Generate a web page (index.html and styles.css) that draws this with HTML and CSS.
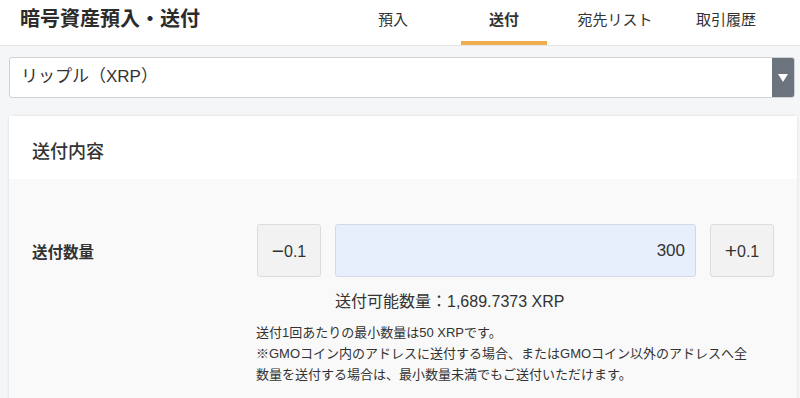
FILE: index.html
```html
<!DOCTYPE html>
<html lang="ja">
<head>
  <meta charset="UTF-8">
  <meta name="viewport" content="width=device-width, initial-scale=1.0">
  <title>暗号資産預入・送付</title>
  <link rel="stylesheet" href="styles.css">
</head>
<body>
  <header class="page-header">
    <h1 class="page-title">暗号資産預入・送付</h1>
    <nav class="tabs">
      <a href="#" class="tab">預入</a>
      <a href="#" class="tab active">送付</a>
      <a href="#" class="tab">宛先リスト</a>
      <a href="#" class="tab">取引履歴</a>
    </nav>
  </header>

  <main class="content">
    <div class="coin-select">
      <span class="coin-name">リップル（XRP）</span>
      <span class="select-arrow">
        <svg width="10" height="8" viewBox="0 0 10 8"><path d="M0 0h10L5 8z" fill="#fff"/></svg>
      </span>
    </div>

    <section class="card">
      <div class="card-header">送付内容</div>
      <div class="card-body">
        <div class="amount-row">
          <div class="amount-label">送付数量</div>
          <div class="amount-controls">
            <button class="step-btn"><span class="sign">−</span>0.1</button>
            <div class="amount-input">300</div>
            <button class="step-btn"><span class="sign">+</span>0.1</button>
          </div>
        </div>
        <p class="available">送付可能数量：1,689.7373 XRP</p>
        <div class="notes">
          <p>送付1回あたりの最小数量は50 XRPです。</p>
          <p>※GMOコイン内のアドレスに送付する場合、またはGMOコイン以外のアドレスへ全数量を送付する場合は、最小数量未満でもご送付いただけます。</p>
        </div>
      </div>
    </section>
  </main>
</body>
</html>
```

FILE: styles.css
```css
body {
  font-family: 'Liberation Sans', 'Noto Sans CJK JP', sans-serif;
  color: #333;
  background-color: #f5f6f8;
  margin: 0;
  height: 398px;
  overflow: hidden;
}

.page-header {
  display: flex;
  align-items: stretch;
  justify-content: space-between;
  height: 45px;
  background-color: #fff;
  border-bottom: 1px solid #e6e6e6;
  padding: 0 31px 0 20px;
}

.page-title {
  margin: 0;
  font-size: 20px;
  font-weight: 700;
  line-height: 38px;
  color: #2b2b2b;
}

.tabs {
  display: flex;
  gap: 25px;
}

.tab {
  width: 86px;
  text-align: center;
  color: #333;
  text-decoration: none;
  font-size: 15px;
  line-height: 40px;
  border-bottom: 4px solid transparent;
}

.tab.active {
  font-weight: 700;
  border-bottom-color: #f0ad4e;
}

.content {
  padding: 11px 3px 0 9px;
}

.coin-select {
  display: flex;
  justify-content: space-between;
  height: 39px;
  margin-right: 2px;
  background-color: #fff;
  border: 1px solid #cfd2d6;
  border-radius: 3px;
  overflow: hidden;
}

.coin-name {
  padding-left: 11px;
  font-size: 17px;
  line-height: 38px;
}

.select-arrow {
  display: flex;
  align-items: center;
  justify-content: center;
  width: 22px;
  background-color: #6b737d;
}

.card {
  margin-top: 18px;
  background-color: #f9f9f9;
  border-radius: 3px;
  box-shadow: 0 0 3px rgba(0, 0, 0, 0.12);
}

.card-header {
  height: 63px;
  background-color: #fff;
  padding-left: 23px;
  font-size: 18px;
  font-weight: 500;
  line-height: 72px;
}

.card-body {
  padding: 45px 23px 20px 23px;
}

.amount-row {
  display: flex;
  align-items: center;
}

.amount-label {
  width: 225px;
  font-size: 15.5px;
  font-weight: 700;
}

.amount-controls {
  flex: 1;
  display: flex;
  gap: 14px;
  height: 53px;
}

.step-btn {
  width: 64px;
  background-color: #f2f2f2;
  border: 1px solid #dcdcdc;
  border-radius: 3px;
  font-family: 'Liberation Sans', sans-serif;
  font-size: 16px;
  color: #333;
  padding: 0;
}

.step-btn .sign {
  font-size: 21px;
  vertical-align: -1px;
}

.amount-input {
  flex: 1;
  background-color: #e8effc;
  border: 1px solid #d3d9e4;
  border-radius: 3px;
  text-align: right;
  padding-right: 10px;
  font-size: 17px;
  line-height: 51px;
}

.available {
  margin: 11px 0 0 303px;
  font-size: 16px;
}

.notes {
  margin: 10px 0 0 224px;
  font-size: 13px;
  line-height: 21px;
  width: 500px;
}

.notes p {
  margin: 0;
}
```
